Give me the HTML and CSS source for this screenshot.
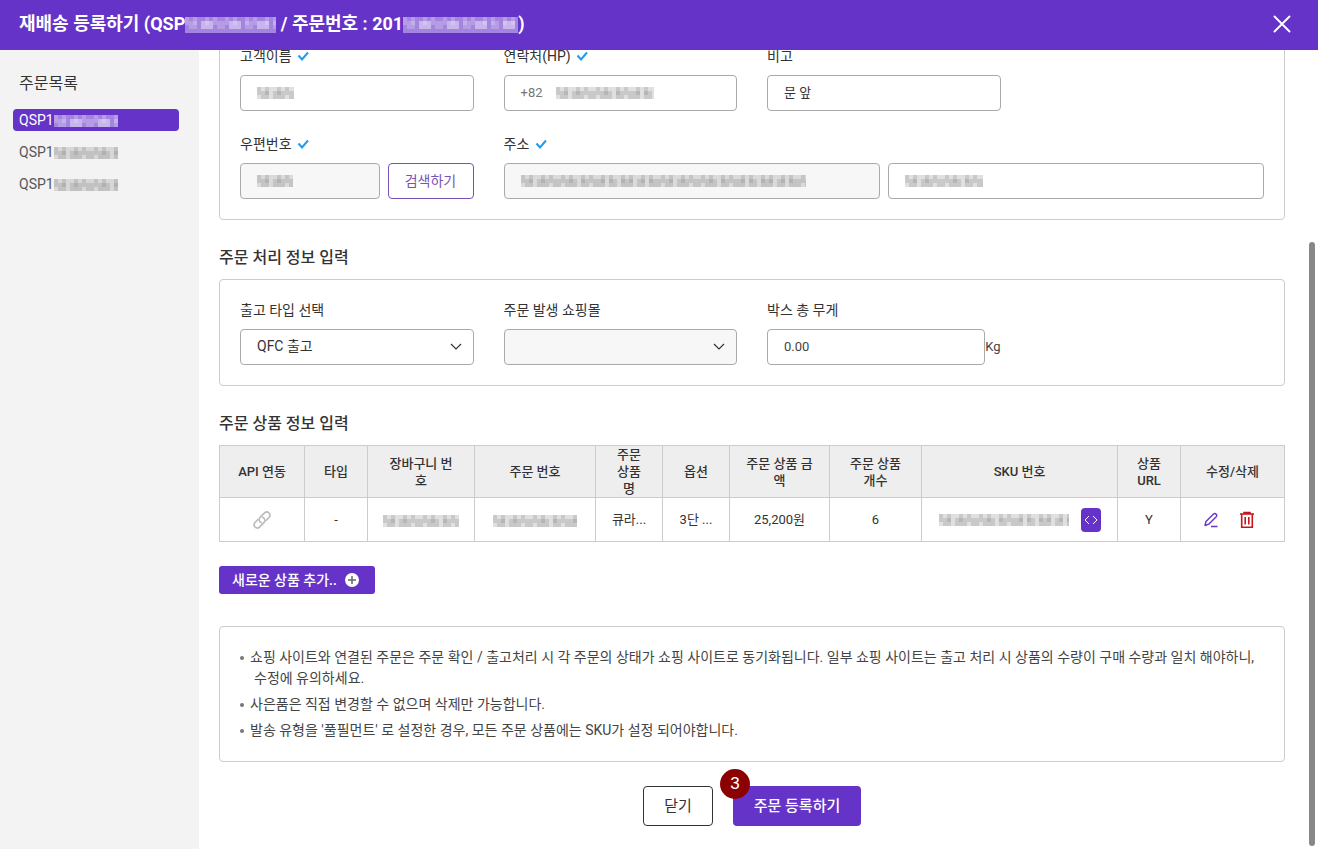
FILE: index.html
```html
<!DOCTYPE html>
<html lang="ko">
<head>
    <meta charset="UTF-8">
    <meta name="viewport" content="width=device-width, initial-scale=1.0">
    <title>재배송 등록하기</title>
    <link rel="stylesheet" href="styles.css">
</head>
<body>
    <header class="header">
        <h1>재배송 등록하기 (QSP<span class="mask mask-light mask-title-id"></span> / 주문번호 : 201<span class="mask mask-light mask-title-no"></span>)</h1>
        <button class="close-button" type="button" aria-label="닫기">
            <svg width="18" height="18" viewBox="0 0 18 18"><path d="M1.500 1.500l15 15M16.500 1.500l-15 15" stroke="#fff" stroke-width="1.900" stroke-linecap="round"/></svg>
        </button>
    </header>

    <div class="layout">
        <nav class="sidebar">
            <h2>주문목록</h2>
            <a class="order active" href="#">QSP1<span class="mask mask-light mask-order"></span></a>
            <a class="order" href="#">QSP1<span class="mask mask-order"></span></a>
            <a class="order" href="#">QSP1<span class="mask mask-order"></span></a>
        </nav>

        <main class="content">
            <!-- 고객 정보 -->
            <section class="panel panel-customer">
                <div class="field">
                    <label for="name">고객이름 <svg class="check" width="12" height="10" viewBox="0 0 12 10"><path d="M1.500 4.500l3.500 4 6-7"/></svg></label>
                    <div class="box"><span class="mask mask-name"></span><input type="text" id="name"></div>
                </div>
                <div class="field">
                    <label for="phone">연락처(HP) <svg class="check" width="12" height="10" viewBox="0 0 12 10"><path d="M1.500 4.500l3.500 4 6-7"/></svg></label>
                    <div class="box"><span class="prefix">+82</span><span class="mask mask-phone"></span><input type="text" id="phone"></div>
                </div>
                <div class="field">
                    <label for="note">비고</label>
                    <div class="box"><input type="text" id="note" value="문 앞"></div>
                </div>
                <div class="field field-start">
                    <label for="zip">우편번호 <svg class="check" width="12" height="10" viewBox="0 0 12 10"><path d="M1.500 4.500l3.500 4 6-7"/></svg></label>
                    <div class="row">
                        <div class="box box-disabled"><span class="mask mask-zip"></span><input type="text" id="zip" readonly></div>
                        <button class="search-button" type="button">검색하기</button>
                    </div>
                </div>
                <div class="field field-wide">
                    <label for="address">주소 <svg class="check" width="12" height="10" viewBox="0 0 12 10"><path d="M1.500 4.500l3.500 4 6-7"/></svg></label>
                    <div class="row">
                        <div class="box box-disabled"><span class="mask mask-address"></span><input type="text" id="address" readonly></div>
                        <div class="box"><span class="mask mask-detail"></span><input type="text" id="addressDetail" aria-label="상세 주소"></div>
                    </div>
                </div>
            </section>

            <!-- 주문 처리 정보 -->
            <h3>주문 처리 정보 입력</h3>
            <section class="panel">
                <div class="field">
                    <label for="outType">출고 타입 선택</label>
                    <div class="select-wrap">
                        <select id="outType"><option>QFC 출고</option></select>
                        <svg class="chevron" width="12" height="8" viewBox="0 0 12 8"><path d="M1 1l5 5 5-5"/></svg>
                    </div>
                </div>
                <div class="field">
                    <label for="mall">주문 발생 쇼핑몰</label>
                    <div class="select-wrap">
                        <select id="mall" disabled><option></option></select>
                        <svg class="chevron" width="12" height="8" viewBox="0 0 12 8"><path d="M1 1l5 5 5-5"/></svg>
                    </div>
                </div>
                <div class="field">
                    <label for="weight">박스 총 무게</label>
                    <div class="weight">
                        <div class="box"><input type="text" id="weight" value="0.00"></div>
                        <span>Kg</span>
                    </div>
                </div>
            </section>

            <!-- 주문 상품 정보 -->
            <h3>주문 상품 정보 입력</h3>
            <table>
                <colgroup>
                    <col class="c-api"><col class="c-type"><col class="c-cart"><col class="c-order"><col class="c-name"><col class="c-option"><col class="c-price"><col class="c-count"><col class="c-sku"><col class="c-url"><col class="c-edit">
                </colgroup>
                <thead>
                    <tr>
                        <th>API 연동</th>
                        <th>타입</th>
                        <th>장바구니 번<br>호</th>
                        <th>주문 번호</th>
                        <th>주문<br>상품<br>명</th>
                        <th>옵션</th>
                        <th>주문 상품 금<br>액</th>
                        <th>주문 상품<br>개수</th>
                        <th>SKU 번호</th>
                        <th>상품<br>URL</th>
                        <th>수정/삭제</th>
                    </tr>
                </thead>
                <tbody>
                    <tr>
                        <td>
                            <svg class="link-icon" width="20" height="20" viewBox="0 0 20 20"><path d="M9.300 12.700C6.900 11.700 6.500 8.900 8.300 7.100L12.500 2.900C15.700.200 19.700 4.300 17 7.500L14 10.500"/><path d="M10.700 7.300C13.100 8.300 13.500 11.100 11.700 12.900L7.500 17.100C4.300 19.800.300 15.700 3 12.500L6 9.500"/></svg>
                        </td>
                        <td>-</td>
                        <td><span class="mask mask-cart"></span></td>
                        <td><span class="mask mask-number"></span></td>
                        <td>큐라...</td>
                        <td>3단 ...</td>
                        <td>25,200원</td>
                        <td>6</td>
                        <td>
                            <div class="actions sku">
                                <span class="mask mask-sku"></span>
                                <button class="code-button" type="button" aria-label="SKU 보기">
                                    <svg width="14" height="10" viewBox="0 0 14 10"><path d="M5 1L1 5l4 4M9 1l4 4-4 4" fill="none" stroke="#fff"/></svg>
                                </button>
                            </div>
                        </td>
                        <td>Y</td>
                        <td>
                            <div class="actions edit">
                                <button class="icon-button" type="button" aria-label="수정">
                                    <svg width="16" height="16" viewBox="0 0 16 16"><path d="M2 13.500l1-4L10.300 2.200Q12 .800 13.200 2.200 14.300 3.500 13 4.900L5.700 12.200zM8 14.500h6.500" fill="none" stroke="#6633c8" stroke-width="1.400" stroke-linejoin="round"/></svg>
                                </button>
                                <button class="icon-button" type="button" aria-label="삭제">
                                    <svg width="16" height="18" viewBox="0 0 16 18"><path d="M1 3h14M5 2.500V1.500h6v1M2.700 3v13.200h10.600V3M6.200 6v7.500M9.800 6v7.500" fill="none" stroke="#c4161c" stroke-width="1.600"/></svg>
                                </button>
                            </div>
                        </td>
                    </tr>
                </tbody>
            </table>

            <button class="add-button" type="button">새로운 상품 추가..
                <svg width="14" height="14" viewBox="0 0 14 14"><circle cx="7" cy="7" r="7" fill="#fff"/><path d="M7 3v8M3 7h8" stroke="#666" stroke-width="1.500"/></svg>
            </button>

            <ul class="notice">
                <li>쇼핑 사이트와 연결된 주문은 주문 확인 / 출고처리 시 각 주문의 상태가 쇼핑 사이트로 동기화됩니다. 일부 쇼핑 사이트는 출고 처리 시 상품의 수량이 구매 수량과 일치 해야하니, 수정에 유의하세요.</li>
                <li>사은품은 직접 변경할 수 없으며 삭제만 가능합니다.</li>
                <li>발송 유형을 '풀필먼트' 로 설정한 경우, 모든 주문 상품에는 SKU가 설정 되어야합니다.</li>
            </ul>

            <div class="buttons">
                <button class="cancel-button" type="button">닫기</button>
                <button class="submit-button" type="submit">주문 등록하기<span class="step">3</span></button>
            </div>
        </main>
        <div class="scroll-thumb"></div>
    </div>
</body>
</html>
```
FILE: styles.css
```css
* {
    box-sizing: border-box;
}

body {
    margin: 0;
    height: 100vh;
    display: flex;
    flex-direction: column;
    overflow: hidden;
    background: #fff;
    color: #333;
    font-family: Roboto, 'Noto Sans CJK KR', sans-serif;
    font-size: 14px;
    line-height: 20px;
}

button,
input,
select {
    font: inherit;
    color: inherit;
}

button {
    padding: 0;
    border: none;
    background: none;
    cursor: pointer;
}

svg {
    fill: none;
}

/* 상단 */
.header {
    position: relative;
    z-index: 1;
    flex: none;
    display: flex;
    align-items: center;
    justify-content: space-between;
    height: 50px;
    padding: 0 27px 3px 19px;
    background: #6633c8;
    color: #fff;
}

.header h1 {
    margin: 0;
    font-size: 18px;
    font-weight: 700;
    line-height: 26px;
}

.close-button {
    display: flex;
}

.layout {
    position: relative;
    flex: 1;
    display: flex;
    min-height: 0;
}

/* 주문목록 */
.sidebar {
    flex: none;
    width: 199px;
    padding: 24px 20px 0 13px;
    display: flex;
    flex-direction: column;
    gap: 10px;
    background: #f3f3f3;
}

.sidebar h2 {
    margin: 0 6px 5px;
    font-size: 16px;
    font-weight: 400;
    line-height: 20px;
}

.order {
    padding: 0 6px;
    border-radius: 4px;
    color: #555;
    line-height: 22px;
    text-decoration: none;
}

.order.active {
    background: #6633c8;
    color: #fff;
}

/* 본문 */
.content {
    flex: 1;
    min-width: 0;
    padding: 0 33px 0 20px;
}

.content h3 {
    margin: 28px 0 11px;
    font-size: 16px;
    font-weight: 500;
    line-height: 20px;
}

.panel {
    display: grid;
    grid-template-columns: repeat(4, 1fr);
    gap: 23px 30px;
    padding: 20px;
    border: 1px solid #ccc;
    border-radius: 4px;
}

.panel-customer {
    margin-top: -25px;
}

.field {
    min-width: 0;
}

.field-start {
    grid-column-start: 1;
}

.field-wide {
    grid-column: span 3;
}

.field label {
    display: block;
    height: 20px;
    margin-bottom: 9px;
    white-space: nowrap;
}

.check {
    margin-left: 2px;
    stroke: #1f9bf0;
    stroke-width: 2;
}

.row {
    display: flex;
    gap: 8px;
}

.box {
    flex: 1;
    min-width: 0;
    display: flex;
    align-items: center;
    height: 36px;
    padding: 0 16px;
    border: 1px solid #aaa;
    border-radius: 4px;
    background: #fff;
    font-size: 13px;
}

.box input {
    flex: 1;
    min-width: 0;
    padding: 0;
    border: none;
    outline: none;
    background: none;
}

.box-disabled,
select:disabled {
    background: #f7f7f7;
}

.prefix {
    margin-right: 13px;
    color: #777;
}

.search-button {
    flex: none;
    width: 86px;
    height: 36px;
    border: 1px solid #7952b3;
    border-radius: 4px;
    color: #7952b3;
}

.select-wrap {
    position: relative;
}

select {
    appearance: none;
    display: block;
    width: 100%;
    height: 36px;
    padding: 0 32px 2px 16px;
    border: 1px solid #aaa;
    border-radius: 4px;
    background: #fff;
    opacity: 1;
}

.chevron {
    position: absolute;
    top: 14px;
    right: 12px;
    stroke: #333;
    stroke-width: 1.2;
    pointer-events: none;
}

.weight {
    display: flex;
    align-items: center;
    color: #444;
    font-size: 13px;
}

/* 상품 표 */
table {
    width: 100%;
    table-layout: fixed;
    border-collapse: collapse;
    font-size: 13px;
    line-height: 17px;
    text-align: center;
}

th,
td {
    padding: 0;
    border: 1px solid #ccc;
}

th {
    height: 52px;
    background: #eee;
    font-weight: 500;
}

td {
    height: 44px;
}

.c-api { width: 85px; }
.c-type { width: 63px; }
.c-cart { width: 107px; }
.c-order { width: 121px; }
.c-name { width: 67px; }
.c-option { width: 67px; }
.c-price { width: 100px; }
.c-count { width: 92px; }
.c-sku { width: 196px; }
.c-url { width: 63px; }
.c-edit { width: 104px; }

.link-icon {
    display: block;
    margin: 0 auto;
    stroke: #bbb;
    stroke-width: 1.6;
    stroke-linecap: round;
}

.actions {
    display: flex;
    align-items: center;
    justify-content: center;
}

.sku {
    gap: 12px;
}

.edit {
    gap: 20px;
    padding-right: 8px;
}

.icon-button,
.code-button {
    display: flex;
    align-items: center;
    justify-content: center;
}

.code-button {
    width: 20px;
    height: 24px;
    border-radius: 4px;
    background: #6633c8;
}

.add-button {
    display: flex;
    align-items: center;
    gap: 8px;
    height: 28px;
    margin: 24px 0 32px;
    padding: 0 16px 0 13px;
    border-radius: 3px;
    background: #6633c8;
    color: #fff;
    font-weight: 500;
}

.notice {
    margin: 0;
    padding: 20px;
    display: flex;
    flex-direction: column;
    gap: 5px;
    border: 1px solid #ccc;
    border-radius: 4px;
    color: #444;
    line-height: 21px;
    list-style: none;
    word-break: keep-all;
}

.notice li {
    padding-left: 14px;
    text-indent: -14px;
}

.notice li::before {
    content: '';
    display: inline-block;
    width: 4px;
    height: 4px;
    margin-right: 6px;
    border-radius: 50%;
    background: #777;
    vertical-align: middle;
}

.buttons {
    display: flex;
    justify-content: center;
    gap: 20px;
    margin-top: 24px;
}

.cancel-button,
.submit-button {
    height: 40px;
    border-radius: 4px;
    font-size: 15px;
}

.cancel-button {
    width: 70px;
    border: 1px solid #333;
}

.submit-button {
    position: relative;
    width: 128px;
    background: #6633c8;
    color: #fff;
    font-weight: 500;
}

.step {
    position: absolute;
    top: -17px;
    left: -13px;
    width: 30px;
    height: 30px;
    border-radius: 50%;
    background: #8b0000;
    font-family: 'Liberation Sans', sans-serif;
    font-size: 17px;
    font-weight: 400;
    line-height: 30px;
}

.scroll-thumb {
    position: absolute;
    top: 192px;
    right: 3px;
    bottom: 3px;
    width: 6px;
    border-radius: 3px;
    background: #888;
}

/* 개인정보 모자이크 */
.mask {
    --a: rgba(110, 110, 110, 0.2);
    --b: rgba(130, 130, 130, 0.25);
    flex: none;
    display: inline-block;
    height: 12px;
    background:
        repeating-linear-gradient(90deg, var(--a) 0 4px, transparent 4px 8px, var(--a) 8px 12px, transparent 12px 20px) 0 0 / 100% 8px no-repeat,
        repeating-linear-gradient(90deg, transparent 0 4px, var(--a) 4px 12px, transparent 12px 16px, var(--b) 16px 28px) 0 4px / 100% 8px no-repeat,
        var(--b);
    vertical-align: middle;
}

.mask-light {
    --a: rgba(255, 255, 255, 0.2);
    --b: rgba(255, 255, 255, 0.4);
}

.mask-title-id { width: 91px; height: 16px; }
.mask-title-no { width: 115px; height: 16px; }
.mask-order { width: 64px; }
.mask-name { width: 37px; }
.mask-phone { width: 98px; }
.mask-zip { width: 36px; }
.mask-address { width: 285px; }
.mask-detail { width: 78px; }
.mask-cart { width: 76px; }
.mask-number { width: 84px; }
.mask-sku { width: 130px; }
```
